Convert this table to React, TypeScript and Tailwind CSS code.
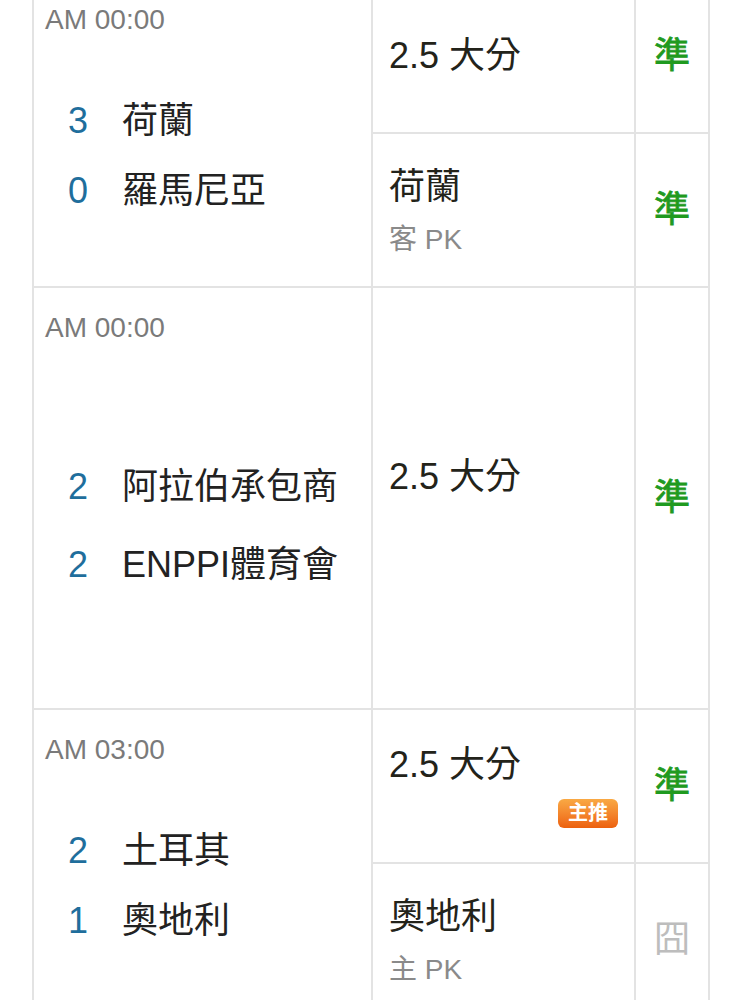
import React from "react";

type Line = { title: string; sub?: string; badge?: boolean; ghostBadge?: boolean; result: "win" | "lose" };
type Match = { time: string; teams: [string, string][]; teamBox: string; height: string; lines: Line[] };

const matches: Match[] = [
  {
    time: "AM 00:00",
    teams: [["3", "荷蘭"], ["0", "羅馬尼亞"]],
    teamBox: "gap-[26px] pb-[8px]",
    height: "h-[306px]",
    lines: [
      { title: "2.5 大分", result: "win" },
      { title: "荷蘭", sub: "客 PK", result: "win" },
    ],
  },
  {
    time: "AM 00:00",
    teams: [["2", "阿拉伯承包商"], ["2", "ENPPI體育會"]],
    teamBox: "gap-[34px] pt-[2px]",
    height: "h-[420px]",
    lines: [{ title: "2.5 大分", ghostBadge: true, result: "win" }],
  },
  {
    time: "AM 03:00",
    teams: [["2", "土耳其"], ["1", "奧地利"]],
    teamBox: "gap-[26px] pb-[8px]",
    height: "h-[306px]",
    lines: [
      { title: "2.5 大分", badge: true, result: "win" },
      { title: "奧地利", sub: "主 PK", result: "lose" },
    ],
  },
];

function Badge({ hidden }: { hidden?: boolean }) {
  return (
    <div
      className={
        "self-end mt-[14px] w-[60px] h-[29px] rounded-[6px] bg-linear-to-b from-[#f9a944] to-[#ec600c] text-white text-[20px] font-bold leading-none flex items-center justify-center " +
        (hidden ? "invisible" : "")
      }
    >
      主推
    </div>
  );
}

function MatchRow({ m }: { m: Match }) {
  return (
    <div className={"flex border-b-2 border-[#e3e3e3] box-content " + m.height}>
      {/* 左邊: 時間 + 比分 */}
      <div className="w-[339px] shrink-0 border-r-2 border-[#e3e3e3] flex flex-col">
        <div className="pt-[26px] pl-[11px] text-[28px] leading-[28px] text-[#7a7a7a]">{m.time}</div>
        <div className={"flex-1 flex flex-col justify-center pl-[34px] " + m.teamBox}>
          {m.teams.map(([score, name]) => (
            <div key={name} className="flex items-center text-[36px] leading-[44px]">
              <span className="w-[20px] text-center text-[#1f6e9c]">{score}</span>
              <span className="ml-[34px] text-[#222222]">{name}</span>
            </div>
          ))}
        </div>
      </div>

      {/* 右邊: 推介 + 結果 */}
      <div className="flex-1 flex flex-col">
        {m.lines.map((l, i) => (
          <div
            key={i}
            className={
              "flex-1 flex " + (i < m.lines.length - 1 ? "border-b-2 border-[#e3e3e3]" : "")
            }
          >
            <div className="w-[263px] shrink-0 border-r-2 border-[#e3e3e3] flex flex-col justify-center pl-[16px] pr-[16px]">
              <div className="text-[36px] leading-[40px] text-[#23231a]">{l.title}</div>
              {l.sub && <div className="mt-[20px] text-[28px] leading-[26px] text-[#8a8a8a]">{l.sub}</div>}
              {l.badge && <Badge />}
              {l.ghostBadge && <Badge hidden />}
            </div>
            <div className="flex-1 flex items-center justify-center">
              {l.result === "win" ? (
                <span className="text-[36px] text-[#1f9a1f] [-webkit-text-stroke:0.8px_#1f9a1f]">準</span>
              ) : (
                <span className="text-[36px] text-[#bdbdbd]">囧</span>
              )}
            </div>
          </div>
        ))}
      </div>
    </div>
  );
}

export default function App() {
  return (
    <div className="w-[742px] h-[1000px] overflow-hidden bg-white font-['Liberation_Sans','Noto_Sans_CJK_TC',sans-serif]">
      <div className="-mt-[20px] ml-[32px] w-[678px] border-l-2 border-r-2 border-[#e3e3e3]">
        {matches.map((m, i) => (
          <MatchRow key={i} m={m} />
        ))}
      </div>
    </div>
  );
}
